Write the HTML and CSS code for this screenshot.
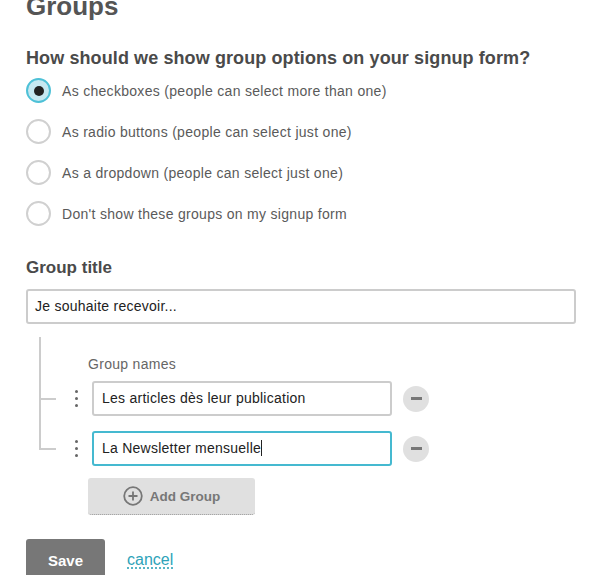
FILE: index.html
```html
<!DOCTYPE html>
<html>
<head>
<meta charset="utf-8">
<link rel="stylesheet" href="styles.css">
</head>
<body>
<div class="page">
  <h1 class="title">Groups</h1>
  <h2 class="question">How should we show group options on your signup form?</h2>
  <ul class="options">
    <li class="option"><span class="radio radio-on"><span class="radio-dot"></span></span><span>As checkboxes (people can select more than one)</span></li>
    <li class="option"><span class="radio"></span><span>As radio buttons (people can select just one)</span></li>
    <li class="option"><span class="radio"></span><span>As a dropdown (people can select just one)</span></li>
    <li class="option"><span class="radio"></span><span>Don't show these groups on my signup form</span></li>
  </ul>
  <h3 class="label-title">Group title</h3>
  <div class="field">Je souhaite recevoir...</div>
  <div class="tree">
    <div class="names-label">Group names</div>
    <div class="row">
      <span class="branch"></span>
      <span class="handle"><i></i><i></i><i></i></span>
      <div class="field field-small">Les articles dès leur publication</div>
      <span class="minus"><i></i></span>
    </div>
    <div class="row">
      <span class="branch"></span>
      <span class="handle"><i></i><i></i><i></i></span>
      <div class="field field-small field-focus">La Newsletter mensuelle<span class="caret"></span></div>
      <span class="minus"><i></i></span>
    </div>
  </div>
  <div class="add-btn">
    <svg class="plus" width="20" height="20" viewBox="0 0 20 20"><circle cx="10" cy="10" r="8.8" fill="none" stroke="#777" stroke-width="1.8"/><path d="M10 5.5v9M5.5 10h9" stroke="#777" stroke-width="1.8"/></svg>
    <span>Add Group</span>
  </div>
  <div class="actions">
    <span class="save">Save</span>
    <a class="cancel" href="#">cancel</a>
  </div>
</div>
</body>
</html>
```
FILE: styles.css
```css
html, body { margin: 0; padding: 0; background: #fff; }
body { font-family: "Liberation Sans", Arial, sans-serif; color: #555; overflow: hidden; }
.page { padding: 0 22px 0 26px; }
.title { font-size: 26px; line-height: 30px; font-weight: bold; margin: -9px 0 0; color: #555; }
.question { font-size: 18px; line-height: 20px; font-weight: bold; margin: 27px 0 0; color: #4a4a4a; letter-spacing: 0.1px; }
.options { list-style: none; margin: 10px 0 0; padding: 0; display: flex; flex-direction: column; gap: 16px; }
.option { display: flex; align-items: center; gap: 11px; font-size: 14px; height: 25px; color: #5a5a5a; letter-spacing: 0.3px; }
.radio { width: 25px; height: 25px; box-sizing: border-box; border: 2px solid #d0d0d0; border-radius: 50%; background: #fff; display: flex; align-items: center; justify-content: center; flex: none; }
.radio-on { border-color: #4ec1d7; background: #c6e8f1; }
.radio-dot { width: 10px; height: 10px; border-radius: 50%; background: #222; }
.label-title { font-size: 17px; line-height: 20px; font-weight: bold; margin: 32px 0 0; color: #4a4a4a; }
.field { box-sizing: border-box; width: 550px; height: 35px; border: 2px solid #ccc; border-radius: 3px; padding: 0 7px; font-size: 14px; line-height: 31px; color: #222; margin-top: 11px; background: #fff; letter-spacing: 0.25px; }
.tree { margin: 13px 0 0 13px; position: relative; padding-top: 19px; }
.tree::before { content: ""; position: absolute; left: 0; top: 0; bottom: 17px; width: 2px; background: #ccc; }
.names-label { padding-left: 49px; font-size: 14px; line-height: 17px; color: #666; letter-spacing: 0.3px; }
.row { display: flex; align-items: center; margin-top: 8px; }
.row + .row { margin-top: 15px; }
.branch { width: 17px; height: 2px; background: #ccc; flex: none; }
.handle { display: flex; flex-direction: column; gap: 4px; margin-left: 19px; width: 3px; flex: none; }
.handle i { display: block; width: 3px; height: 3px; border-radius: 50%; background: #666; }
.field-small { width: 300px; margin: 0 0 0 14px; padding: 0 8px; }
.field-focus { border-color: #45b9d0; }
.caret { display: inline-block; width: 1px; height: 16px; background: #222; vertical-align: -3px; }
.minus { width: 26px; height: 26px; border-radius: 50%; background: #e0e0e0; margin-left: 11px; display: flex; align-items: center; justify-content: center; flex: none; }
.minus i { display: block; width: 11px; height: 3px; background: #777; }
.add-btn { margin: 12px 0 0 62px; width: 167px; height: 37px; box-sizing: border-box; background: #e0e0e0; border-radius: 3px; border-bottom: 1px dotted #999; display: flex; align-items: center; justify-content: center; gap: 7px; font-size: 13.5px; font-weight: bold; color: #777; }
.plus { display: block; }
.actions { display: flex; align-items: center; margin-top: 24px; gap: 22px; }
.save { width: 79px; height: 42px; background: #777; color: #fff; border-radius: 3px; font-weight: bold; font-size: 15px; display: flex; align-items: center; justify-content: center; }
.cancel { color: #2ea3b9; font-size: 16px; text-decoration: underline dotted; text-underline-offset: 3px; }
```
